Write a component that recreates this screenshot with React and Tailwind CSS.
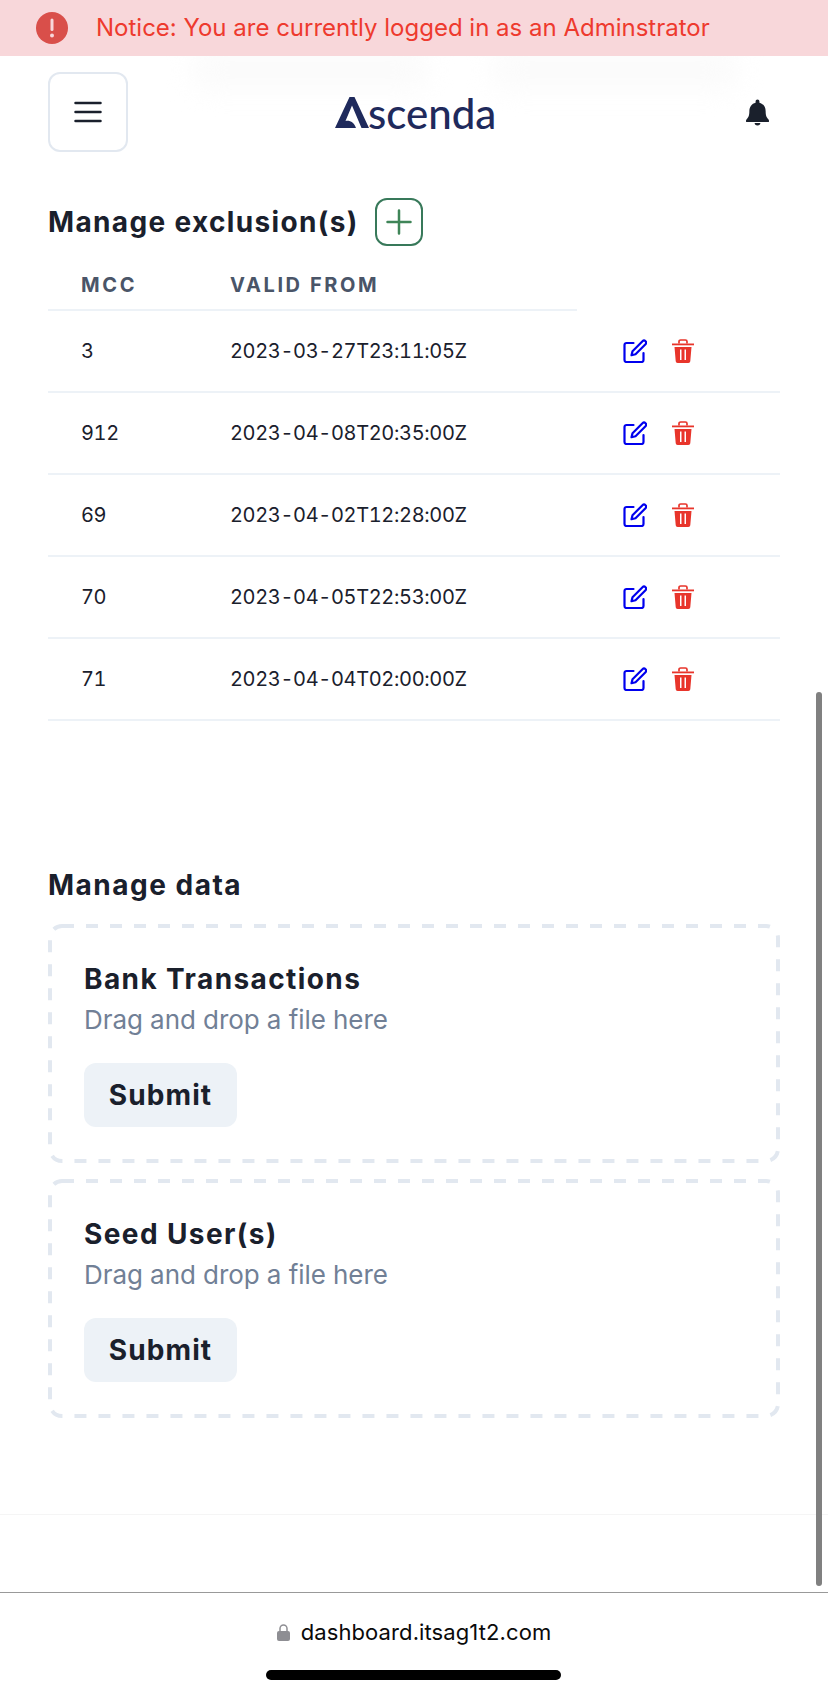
const rows = [
  ["3", "2023-03-27T23:11:05Z"],
  ["912", "2023-04-08T20:35:00Z"],
  ["69", "2023-04-02T12:28:00Z"],
  ["70", "2023-04-05T22:53:00Z"],
  ["71", "2023-04-04T02:00:00Z"],
];

function EditIcon() {
  return (
    <svg width="24" height="24" viewBox="0 0 24 24" fill="none" stroke="#0000ee" strokeWidth="2.200" strokeLinecap="round" strokeLinejoin="round">
      <path d="M10.500 4H3.500a2 2 0 0 0-2 2v15a2 2 0 0 0 2 2h15a2 2 0 0 0 2-2v-7" />
      <path d="M19.500 2.200a2.100 2.100 0 0 1 3 3L12.500 15.200 8.500 16.200l1-4z" />
    </svg>
  );
}

function TrashIcon() {
  return (
    <svg width="24" height="24" viewBox="0 0 24 24">
      <path d="M1 4.500h22v1.800H1z" fill="#e8352b" />
      <path d="M8 4.500V2.600C8 1.600 8.800 1 9.600 1h4.800c.8 0 1.600.6 1.600 1.600v1.900" fill="none" stroke="#e8352b" strokeWidth="1.700" />
      <path fillRule="evenodd" d="M3.500 8h17l-1.200 14c-.1 1.200-.8 2-2 2H6.700c-1.200 0-1.900-.8-2-2zM9 10.500v10.500h1.500V10.500zm4.500 0v10.500H15V10.500z" fill="#e8352b" />
    </svg>
  );
}

function UploadBox({ title }) {
  return (
    <div className="relative h-[239px] w-[732px] pl-[36px] pt-[34px]">
      <svg className="absolute left-0 top-0" width="732" height="239" fill="none">
        <rect x="2" y="2" width="728" height="235" rx="12" stroke="#e2e8f0" strokeWidth="4" strokeDasharray="12 12" />
      </svg>
      <h3 className="text-[28px] font-bold leading-[42px] tracking-[1.400px] text-[#1a202c]">{title}</h3>
      <p className="text-[26px] leading-[39px] tracking-[-0.06px] text-[#718096]">Drag and drop a file here</p>
      <button className="mt-[24px] h-16 w-[153px] rounded-xl bg-[#edf2f7] text-[28px] font-bold tracking-[1.100px] text-[#1a202c]">Submit</button>
    </div>
  );
}

export default function App() {
  return (
    <div className="relative flex h-[1696px] w-[828px] flex-col overflow-hidden bg-white font-['Inter',sans-serif]">
      <div className="absolute left-[190px] top-[50px] h-[40px] w-[240px] rounded-full bg-[#fbfbfb] blur-md" />
      <div className="absolute left-[490px] top-[50px] h-[40px] w-[250px] rounded-full bg-[#fbfbfb] blur-md" />
      <div className="relative flex h-14 shrink-0 items-center bg-[#f8d7da] pl-9">
        <svg width="32" height="32" viewBox="0 0 32 32">
          <circle cx="16" cy="16" r="16" fill="#d94f4a" />
          <rect x="14.500" y="6.500" width="3" height="12.500" rx="1.500" fill="#f8d7da" />
          <circle cx="16" cy="23.500" r="2" fill="#f8d7da" />
        </svg>
        <span className="ml-[28px] text-[24px] leading-9 text-[#ee3a2e]">Notice: You are currently logged in as an Adminstrator</span>
      </div>

      <header className="relative mt-4 flex h-20 shrink-0 items-center justify-between pl-[48px] pr-[59px]">
        <button className="flex h-20 w-20 items-center justify-center rounded-xl border-2 border-[#e2e8f0]">
          <svg width="28" height="22" viewBox="0 0 28 22" stroke="#1a202c" strokeWidth="2.500" strokeLinecap="round">
            <path d="M1.500 2h25M1.500 11h25M1.500 20h25" />
          </svg>
        </button>
        <div className="absolute left-[335px] top-[17px] flex items-end">
          <svg width="36" height="31" viewBox="0 0 36 31" className="mb-[9px]">
            <path d="M14.500 0h5L34 31h-7.500L17 8.500l-6.500 15.500c4.500-1 8.500 1.500 10.500 7H0z" fill="#1f2a5c" />
          </svg>
          <span className="-ml-[3px] font-['Lato',sans-serif] text-[42px] font-medium leading-[48px] text-[#1f2a5c]">scenda</span>
        </div>
        <svg width="23" height="27" viewBox="0 0 24 27" fill="#1a202c">
          <path d="M12 0c1.200 0 2 .8 2 2v1.300c4 1 6.500 4.300 6.500 9 0 5 1.200 6.700 3 8.500.5.6.5 1.200.5 1.700 0 .6-.5 1-1 1H1c-.5 0-1-.4-1-1 0-.5 0-1.100.5-1.700 1.800-1.800 3-3.500 3-8.500 0-4.700 2.500-8 6.500-9V2c0-1.200.8-2 2-2z" />
          <path d="M9 24.500h6a3 2.500 0 0 1-6 0z" />
        </svg>
      </header>

      <main className="relative flex flex-col pl-[48px]">
        <div className="mt-[46px] flex h-12 items-center">
          <h2 className="text-[28px] font-bold leading-[42px] tracking-[1.350px] text-[#1a202c]">Manage exclusion(s)</h2>
          <button className="ml-[16px] flex h-12 w-12 items-center justify-center rounded-xl border-2 border-[#38795a]">
            <svg width="26" height="26" viewBox="0 0 26 26" stroke="#3f8558" strokeWidth="2.500" strokeLinecap="round">
              <path d="M13 1.500v23M1.500 13h23" />
            </svg>
          </button>
        </div>

        <table className="w-[732px] table-fixed border-collapse text-left">
          <thead>
            <tr className="h-[64px] border-b-2 border-[#edf2f7]">
              <th className="w-[150px] pl-[33px] pt-[14px] text-[20px] font-bold tracking-[2.600px] text-[#4a5568]">MCC</th>
              <th className="w-[379px] pl-[32px] pt-[14px] text-[20px] font-bold tracking-[2.600px] text-[#4a5568]">VALID FROM</th>
              <th className="border-b-2 border-white" />
            </tr>
          </thead>
          <tbody>
            {rows.map(([mcc, date]) => (
              <tr key={date} className="h-[82px] border-b-2 border-[#edf2f7] text-[20px] tabular-nums tracking-[-0.35px] text-[#1a202c]">
                <td className="pl-[33px]">{mcc}</td>
                <td className="pl-[32px]">{date}</td>
                <td className="pl-[46px]">
                  <div className="flex items-center gap-6">
                    <EditIcon />
                    <TrashIcon />
                  </div>
                </td>
              </tr>
            ))}
          </tbody>
        </table>

        <h2 className="mt-[143px] text-[28px] font-bold leading-[42px] tracking-[1.500px] text-[#1a202c]">Manage data</h2>
        <div className="mt-[18px] flex flex-col gap-[16px]">
          <UploadBox title="Bank Transactions" />
          <UploadBox title="Seed User(s)" />
        </div>
      </main>

      <div className="absolute bottom-[181px] left-0 h-px w-full bg-[#f5f5f5]" />
      <div className="absolute right-[6px] top-[692px] h-[894px] w-[6px] rounded-full bg-[#808080]" />

      <footer className="absolute bottom-0 left-0 flex h-[104px] w-full flex-col items-center border-t-[1.500px] border-[#999999] bg-white">
        <div className="mt-[26px] flex items-center gap-[11px]">
          <svg width="13" height="17" viewBox="0 0 13 17">
            <path d="M3 7V4.500a3.500 3.500 0 0 1 7 0V7" fill="none" stroke="#8e8e93" strokeWidth="1.500" />
            <rect x="0" y="7" width="13" height="10" rx="2" fill="#8e8e93" />
          </svg>
          <span className="text-[22px] leading-[27px] tracking-[0.1px] text-[#0a0a0a]">dashboard.itsag1t2.com</span>
        </div>
        <div className="absolute bottom-[16px] left-[266px] h-[10px] w-[295px] rounded-full bg-black" />
      </footer>
    </div>
  );
}
